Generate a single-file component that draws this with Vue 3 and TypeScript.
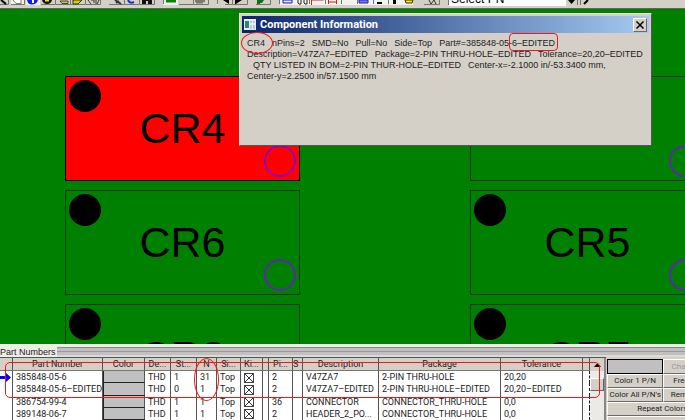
<script setup lang="ts">
interface Part {
  name: string
  x: number
  y: number
  active?: boolean
}
interface Row {
  pn: string
  st: string
  n: string
  pins: string
  desc: string
  pkg: string
  tol: string
}

const parts: Part[] = [
  { name: 'CR4', x: 65, y: 67, active: true },
  { name: 'CR3', x: 470, y: 67 },
  { name: 'CR6', x: 65, y: 181 },
  { name: 'CR5', x: 470, y: 181 },
  { name: 'CR8', x: 65, y: 295 },
  { name: 'CR7', x: 470, y: 295 },
]

const widths = [13, 90, 42, 26, 26, 20, 24, 22, 6, 24, 10, 76, 122, 82]
const heads = ['', 'Part Number', 'Color', 'De...', 'St...', 'N', 'Si...', 'Ki...', '', 'Pi...', 'S', 'Description', 'Package', 'Tolerance']

const rows: Row[] = [
  { pn: '385848-05-6', st: '1', n: '31', pins: '2', desc: 'V47ZA7', pkg: '2-PIN THRU-HOLE', tol: '20,20' },
  { pn: '385848-05-6–EDITED', st: '0', n: '1', pins: '2', desc: 'V47ZA7–EDITED', pkg: '2-PIN THRU-HOLE–EDITED', tol: '20,20–EDITED' },
  { pn: '386754-99-4', st: '1', n: '1', pins: '36', desc: 'CONNECTOR', pkg: 'CONNECTOR_THRU-HOLE', tol: '0,0' },
  { pn: '389148-06-7', st: '1', n: '1', pins: '2', desc: 'HEADER_2_PO...', pkg: 'CONNECTOR_THRU-HOLE', tol: '0,0' },
]
</script>

<template>
  <div class="app">
    <header class="toolbar">
      <svg class="tools" width="449" height="8" viewBox="0 0 449 8" aria-hidden="true">
        <g fill="#f4f2ee">
          <rect x="11" width="13" height="4" /><rect x="26" width="14" height="5" />
          <rect x="163" width="15" height="5" /><rect x="217" width="1" height="5" />
          <rect x="280" width="108" height="5" /><rect x="389" width="24" height="5" />
        </g>
        <g fill="none" stroke="#77746f">
          <path d="M0 4.500H8.500V0M11 4.500H24.500V0M41 4.500H55.500V0M56 4.500H70.500V0M71 4.500H85.500V0M86 4.500H100.500V0M109 4.500H124.500V0M125 4.500H139.500V0M140 4.500H154.500V0M163.500 4V0M179 4.500H193.500V0M194 4.500H208.500V0M217.500 4V0M225 4.500H232.500V0M233 4.500H247.500V0M256 4.500H270.500V0M279.500 4V0M309.500 4V0M325.500 4V0M341.500 4V0M357.500 4V0M388.500 4V0M373.500 4V0M424 4.500H439.500V0M448.500 5V0" />
        </g>
        <path d="M1 0L6 4" stroke="#000" stroke-width="2" />
        <path d="M13 0l3 3.500h5V0" fill="#fff" stroke="#777" />
        <path d="M27 0h11q-1 4-5.500 4.500T27 0" fill="#0a21e8" /><path d="M32 0h2v3h-2z" fill="#fff" />
        <path d="M42 0h10q-1 4-5 4t-5-4" fill="#111" /><path d="M45 0h4v1.500h-4z" fill="#ee0" />
        <path d="M60 1h8v2.500h-6z" fill="#d8c43a" stroke="#444" />
        <path d="M73 0h9l-4 4h-5z" fill="#d9cc00" stroke="#332" />
        <path d="M88 0l3 4m0-4h3v3m2-3v4m3-4l-2 4" fill="none" stroke="#333" />
        <path d="M115 0l6 4m-5-1l3-2" stroke="#333" stroke-width="2" />
        <path d="M128 0q2 4 6 2" fill="none" stroke="#1735d0" stroke-width="2" />
        <path d="M142 0h4v4h-4zm6 0h4v4h-4zm-3 0h4v1h-4z" fill="#111" />
        <path d="M166 0h10v2.500h-10z" fill="#07820b" />
        <path d="M195 0h10v2h-2v1.500h-7V2h-1z" fill="#7b7871" />
        <path d="M223 0h6v4zM235 0h7l-7 4.500z" fill="#000" />
        <path d="M257 0h7l-2 3h-2v1h-3z" fill="#116f13" />
        <path d="M283 0h9v3h-9z" fill="#dcdcff" stroke="#2222a0" /><path d="M298 0v3l1 1h2V0m3 0v3l1 1h2V0" fill="none" stroke="#222" />
        <path d="M311.500 5V0h12M328.500 4V0m8 4V0m-8 2h8" fill="none" stroke="#c22" />
        <path d="M359 0h9v3h-9z" fill="#77f" stroke="#2222a0" /><path d="M377 2h5v2h-5zm16-2h3v4h-3z" fill="#000" />
        <path d="M405 0h8l-1 3h-6z" fill="#fce500" stroke="#332" /><path d="M429 0l2 4 3-4 2 4" fill="none" stroke="#333" />
      </svg>
      <select class="pick" aria-label="Select PN"><option>Select PN</option></select>
      <svg class="pick-end" width="28" height="8" viewBox="0 0 28 8" aria-hidden="true">
        <path d="M2 0h7L5.500 4z" fill="#000" /><path d="M22 0l-4 4" stroke="#000" stroke-width="2" /><path d="M11.500 0v5M14.500 0v5" fill="none" stroke="#77746f" />
      </svg>
    </header>

    <main class="board">
      <div
        v-for="p in parts"
        :key="p.name"
        class="part"
        :class="{ active: p.active }"
        :style="{ left: p.x + 'px', top: p.y + 'px' }"
      >
        <span class="pin1"></span>
        <span class="part-name">{{ p.name }}</span>
        <span class="pin2"></span>
      </div>

      <section class="dialog" role="dialog" aria-labelledby="dlg-title">
        <div class="titlebar">
          <svg width="12" height="11" viewBox="0 0 12 11" aria-hidden="true">
            <path d="M0 0h12v11H0z" fill="#e9eef2" /><path d="M1 2h4v7H1z" fill="#2a837f" /><path d="M6 2h2v2H6zm3 0h2v2H9zM6 6h2v4H6zm3 0h2v4H9z" fill="#b9c6cc" />
          </svg>
          <h1 id="dlg-title">Component Information</h1>
          <button class="close" type="button" aria-label="Close">
            <svg width="8" height="8" viewBox="0 0 8 8"><path d="M0.500 0.500l7 7M7.500 0.500l-7 7" stroke="#000" stroke-width="1.500" /></svg>
          </button>
        </div>
        <div class="info">
          <p><span>CR4</span><span>nPins=2</span><span>SMD=No</span><span>Pull=No</span><span>Side=Top</span><span>Part#=385848-05-6–EDITED</span></p>
          <p><span>Description=V47ZA7–EDITED</span><span>Package=2-PIN THRU-HOLE–EDITED</span><span>Tolerance=20,20–EDITED</span></p>
          <p class="indent"><span>QTY LISTED IN BOM=2-PIN THUR-HOLE–EDITED</span><span>Center-x=-2.1000 in/-53.3400 mm,</span></p>
          <p><span>Center-y=2.2500 in/57.1500 mm</span></p>
        </div>
        <span class="mark mark-ref"></span>
        <span class="mark mark-edit"></span>
      </section>
    </main>

    <section class="panel">
      <div class="panel-head"><h2>Part Numbers</h2><span class="grip"></span></div>
      <div class="panel-body">
        <div class="list">
          <table>
            <colgroup><col v-for="(w, i) in widths" :key="i" :style="{ width: w + 'px' }" /><col /></colgroup>
            <thead>
              <tr><th v-for="(h, i) in heads" :key="i" :class="{ cut: h === 'S' }">{{ h }}</th><th></th></tr>
            </thead>
            <tbody>
              <tr v-for="(r, i) in rows" :key="r.pn">
                <td class="gutter">
                  <svg v-if="i === 0" width="11" height="11" viewBox="0 0 11 11" aria-label="Current row"><path d="M0 4h6V1l5 4.500L6 10V7H0z" fill="#00f" /></svg>
                </td>
                <td>{{ r.pn }}</td>
                <td class="swatch"></td>
                <td>THD</td>
                <td>{{ r.st }}</td>
                <td>{{ r.n }}</td>
                <td>Top</td>
                <td class="tick"><input type="checkbox" checked :aria-label="'Kit ' + r.pn" /></td>
                <td></td>
                <td>{{ r.pins }}</td>
                <td></td>
                <td>{{ r.desc }}</td>
                <td>{{ r.pkg }}</td>
                <td>{{ r.tol }}</td>
                <td class="edge"></td>
              </tr>
            </tbody>
          </table>
          <div class="scroll">
            <button type="button" aria-label="Scroll up"><svg width="7" height="4" viewBox="0 0 7 4"><path d="M0 4h7L3.500 0z" fill="#000" /></svg></button>
            <span class="thumb"></span>
          </div>
          <span class="mark mark-rows"></span>
          <span class="mark mark-n"></span>
        </div>
        <div class="actions">
          <button type="button" class="colorbox" aria-label="Current color"></button>
          <button type="button" disabled>Change</button>
          <button type="button" class="first">Color 1 P/N</button>
          <button type="button">Freeze</button>
          <button type="button" class="first">Color All P/N's</button>
          <button type="button">Remove</button>
          <button type="button" class="wide">Repeat Colors/Shapes</button>
          <button type="button" class="wide" disabled>Abort Repeat</button>
        </div>
      </div>
    </section>
  </div>
</template>

<style>
body {
  margin: 0;
  overflow: hidden;
}
</style>

<style scoped>
* {
  box-sizing: border-box;
}
.app {
  display: flex;
  flex-direction: column;
  height: 100vh;
  overflow: hidden;
  background: #d4d0c8;
  color: #222;
  font-family: "Liberation Sans", Arial, sans-serif;
  font-size: 9px;
}
h1, h2, p {
  margin: 0;
}
button {
  padding: 0;
  border: 1px solid;
  border-color: #fff #6c6a66 #6c6a66 #fff;
  border-radius: 0;
  background: #d4d0c8;
  color: #222;
  font: inherit;
}

.toolbar {
  display: flex;
  flex: none;
  height: 9px;
  overflow: hidden;
  border-bottom: 1px solid #5d665a;
}
.tools, .pick-end {
  flex: none;
}
.pick {
  appearance: none;
  flex: none;
  width: 117px;
  height: 18px;
  margin-top: -12px;
  padding: 4px 2px 0;
  border: 0;
  border-bottom: 1px solid #fff;
  border-radius: 0;
  background: #fff;
  color: #000;
  font: 12px/12px "Liberation Sans", Arial, sans-serif;
}

.board {
  position: relative;
  flex: 1;
  min-height: 0;
  overflow: hidden;
  background: #008000;
}
.part {
  position: absolute;
  display: flex;
  justify-content: space-between;
  width: 235px;
  height: 105px;
  padding: 3px;
  border: 1px solid #003c00;
  color: #000;
}
.part.active {
  border-color: #000;
  background: #f00;
}
.pin1, .pin2 {
  width: 32px;
  height: 32px;
  border-radius: 50%;
  background: #000;
}
.pin2 {
  align-self: flex-end;
  border: 2px solid #6322b4;
  background: none;
}
.active .pin2 {
  border-color: #9300b8;
}
.part-name {
  align-self: center;
  padding-bottom: 2px;
  font-size: 43px;
  line-height: 48px;
}

.dialog {
  position: absolute;
  top: 4px;
  left: 239px;
  width: 413px;
  height: 133px;
  padding: 2px;
  border: 1px solid;
  border-color: #e8e5df #555 #555 #e8e5df;
  background: #d4d0c8;
}
.titlebar {
  display: flex;
  align-items: center;
  gap: 4px;
  height: 17px;
  padding: 0 2px;
  background: linear-gradient(90deg, #0a246a, #a6caf0);
}
.titlebar h1 {
  flex: 1;
  color: #fff;
  font: bold 11px/16px Roboto, Tahoma, sans-serif;
}
.close {
  display: flex;
  align-items: center;
  justify-content: center;
  width: 14px;
  height: 14px;
}
.info {
  padding: 5px;
  line-height: 11px;
  white-space: nowrap;
}
.info p {
  display: flex;
  gap: 7px;
}
.info .indent {
  padding-left: 6px;
}
.mark {
  position: absolute;
  border: 1px solid #f01818;
  pointer-events: none;
}
.mark-ref {
  top: 18px;
  left: 1px;
  width: 32px;
  height: 22px;
  border-radius: 50%;
}
.mark-edit {
  top: 19px;
  left: 269px;
  width: 49px;
  height: 18px;
  border-radius: 4px;
}

.panel {
  display: flex;
  flex: none;
  flex-direction: column;
  height: 76px;
  border-top: 3px solid #efede8;
}
.panel-head {
  display: flex;
  height: 10px;
}
.panel-head h2 {
  padding-right: 1px;
  background: #efede8;
  font-size: 9px;
  font-weight: normal;
  line-height: 11px;
}
.grip {
  flex: 1;
  border-top: 1px solid #888;
  border-bottom: 2px solid #dedbd5;
  background: linear-gradient(#c0c0c0 0 3px, #999 3px 4px, #c0c0c0 4px);
}
.panel-body {
  display: flex;
  flex: 1;
  min-height: 0;
}
.list {
  position: relative;
  display: flex;
  flex: 607;
  min-width: 0;
  overflow: hidden;
  border-top: 1px solid #555;
  background: #fff;
}
table {
  flex: 1;
  width: 0;
  table-layout: fixed;
  border-collapse: separate;
  border-spacing: 0;
  font-family: Roboto, Arial, sans-serif;
}
th, td {
  height: 12px;
  padding: 0 0 0 3px;
  overflow: hidden;
  border-right: 1px solid #555;
  font-weight: normal;
  line-height: 12px;
  text-align: left;
  white-space: nowrap;
}
th {
  padding: 0;
  border-bottom: 1px solid #777;
  background: #d4d0c8;
  text-align: center;
}
th.cut {
  text-align: left;
}
td.gutter {
  padding: 0;
}
td.swatch {
  border-bottom: 1px solid #222;
  border-left: 1px solid #222;
  background: #c0c0c0;
}
td.edge {
  border-right: 1px dashed #222;
}
.gutter svg, .tick input {
  display: block;
}
.tick input {
  appearance: none;
  width: 10px;
  height: 10px;
  margin: 1px 0 0;
  border: 1px solid #444;
  border-radius: 0;
  background:
    linear-gradient(45deg, transparent 45%, #333 45% 55%, transparent 55%),
    linear-gradient(135deg, transparent 45%, #333 45% 55%, transparent 55%);
}
.scroll {
  display: flex;
  flex: none;
  flex-direction: column;
  gap: 7px;
  width: 16px;
  border-right: 2px solid #888;
  background: #eceae6;
}
.scroll button {
  display: flex;
  align-items: center;
  justify-content: center;
  height: 13px;
  border-color: #d4d0c8;
}
.thumb {
  height: 13px;
  border: 1px solid;
  border-color: #fff #666 #666 #fff;
  background: #d4d0c8;
}
.mark-rows {
  top: 4px;
  right: 6px;
  left: 5px;
  height: 36px;
  border-radius: 5px;
}
.mark-n {
  top: 0;
  left: 194px;
  width: 25px;
  height: 43px;
  border-radius: 50%;
}

.actions {
  display: grid;
  flex: 78;
  grid-template-rows: 15px 14px 14px 14px 14px;
  grid-template-columns: 56px 44px 40px;
  align-content: start;
  min-width: 0;
  padding: 2px 0 0 1px;
  overflow: hidden;
}
.actions button {
  font: 8px/10px Roboto, Tahoma, sans-serif;
  white-space: nowrap;
}
.actions .first {
  grid-column: 1;
}
.actions .wide {
  grid-column: 1 / span 3;
}
.actions .colorbox {
  border: 1px solid #000;
  background: #c0c0c0;
}
.actions button:disabled {
  color: #999;
}
</style>
